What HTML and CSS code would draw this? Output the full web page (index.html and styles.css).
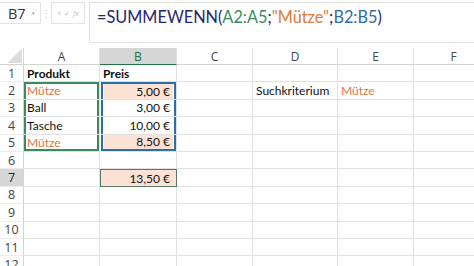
FILE: index.html
```html
<!DOCTYPE html>
<html lang="de">
<head>
    <meta charset="UTF-8">
    <meta name="viewport" content="width=device-width, initial-scale=1.0">
    <title>SUMMEWENN</title>
    <link rel="stylesheet" href="styles.css">
</head>
<body>
    <div class="formula-bar">
        <div class="name-box">B7<span class="drop">&#9662;</span></div>
        <div class="dots">&#8942;</div>
        <div class="fx-box"><span>&#215;</span><span>&#10003;</span><span class="fx">fx</span></div>
        <div class="formula">=SUMMEWENN(<span class="f-green">A2:A5</span>;<span class="f-orange">"Mütze"</span>;<span class="f-blue">B2:B5</span>)</div>
    </div>

    <div class="sheet">
        <div class="corner"></div>
        <div class="col-head">A</div>
        <div class="col-head active">B</div>
        <div class="col-head">C</div>
        <div class="col-head">D</div>
        <div class="col-head">E</div>
        <div class="col-head">F</div>

        <div class="row-head">1</div>
        <div class="cell bold">Produkt</div>
        <div class="cell bold">Preis</div>
        <div class="cell"></div>
        <div class="cell"></div>
        <div class="cell"></div>
        <div class="cell"></div>

        <div class="row-head">2</div>
        <div class="cell orange green-top">Mütze</div>
        <div class="cell num blue-top"><span class="fill">5,00 €</span></div>
        <div class="cell"></div>
        <div class="cell">Suchkriterium</div>
        <div class="cell orange">Mütze</div>
        <div class="cell"></div>

        <div class="row-head">3</div>
        <div class="cell green-mid">Ball</div>
        <div class="cell num blue-mid"><span class="plain">3,00 €</span></div>
        <div class="cell"></div>
        <div class="cell"></div>
        <div class="cell"></div>
        <div class="cell"></div>

        <div class="row-head">4</div>
        <div class="cell green-mid">Tasche</div>
        <div class="cell num blue-mid"><span class="plain">10,00 €</span></div>
        <div class="cell"></div>
        <div class="cell"></div>
        <div class="cell"></div>
        <div class="cell"></div>

        <div class="row-head">5</div>
        <div class="cell orange green-bot">Mütze</div>
        <div class="cell num blue-bot"><span class="fill">8,50 €</span></div>
        <div class="cell"></div>
        <div class="cell"></div>
        <div class="cell"></div>
        <div class="cell"></div>

        <div class="row-head">6</div>
        <div class="cell"></div>
        <div class="cell"></div>
        <div class="cell"></div>
        <div class="cell"></div>
        <div class="cell"></div>
        <div class="cell"></div>

        <div class="row-head active">7</div>
        <div class="cell"></div>
        <div class="cell num result">13,50 €</div>
        <div class="cell"></div>
        <div class="cell"></div>
        <div class="cell"></div>
        <div class="cell"></div>

        <div class="row-head">8</div>
        <div class="cell"></div>
        <div class="cell"></div>
        <div class="cell"></div>
        <div class="cell"></div>
        <div class="cell"></div>
        <div class="cell"></div>

        <div class="row-head">9</div>
        <div class="cell"></div>
        <div class="cell"></div>
        <div class="cell"></div>
        <div class="cell"></div>
        <div class="cell"></div>
        <div class="cell"></div>

        <div class="row-head">10</div>
        <div class="cell"></div>
        <div class="cell"></div>
        <div class="cell"></div>
        <div class="cell"></div>
        <div class="cell"></div>
        <div class="cell"></div>

        <div class="row-head">11</div>
        <div class="cell"></div>
        <div class="cell"></div>
        <div class="cell"></div>
        <div class="cell"></div>
        <div class="cell"></div>
        <div class="cell"></div>

        <div class="row-head">12</div>
        <div class="cell"></div>
        <div class="cell"></div>
        <div class="cell"></div>
        <div class="cell"></div>
        <div class="cell"></div>
        <div class="cell"></div>
    </div>
</body>
</html>
```

FILE: styles.css
```css
body {
    margin: 0;
    background-color: #fff;
    font-family: "Open Sans", sans-serif;
    overflow: hidden;
}

/* top bar with name box and formula */
.formula-bar {
    display: flex;
    align-items: flex-start;
    height: 48px;
    padding-top: 2px;
    box-sizing: border-box;
}
.name-box {
    width: 41px;
    height: 22px;
    box-sizing: border-box;
    border: 1px solid #e3e3e3;
    border-left: none;
    display: flex;
    align-items: center;
    padding-left: 8px;
    font-size: 14.5px;
    color: #333;
}
.name-box .drop {
    font-size: 5px;
    color: #999;
    margin-left: 6px;
}
.dots {
    width: 10px;
    text-align: center;
    font-size: 10px;
    line-height: 22px;
    color: #ccc;
}
.fx-box {
    width: 34px;
    height: 22px;
    box-sizing: border-box;
    border: 1px solid #e3e3e3;
    display: flex;
    align-items: center;
    justify-content: space-around;
    padding: 0 4px;
    font-size: 7px;
    color: #bbb;
}
.fx-box .fx {
    font-style: italic;
}
.formula {
    flex: 1;
    height: 41px;
    margin-left: 4px;
    box-sizing: border-box;
    border: 1px solid #e3e3e3;
    border-right: none;
    padding: 4px 0 0 7px;
    font-family: "Lato", sans-serif;
    font-size: 16.3px;
    line-height: 20px;
    color: #27266e;
    white-space: nowrap;
}
.f-green { color: #3b8a5b; }
.f-orange { color: #d97c3c; }
.f-blue { color: #2f6ea5; }

/* worksheet grid */
.sheet {
    display: grid;
    grid-template-columns: 24px 76px 77px 76px 85px 76px 80px;
    grid-template-rows: 17px;
    grid-auto-rows: 17.4px;
    font-family: "Lato", sans-serif;
    font-size: 12px;
    color: #111;
}
.corner {
    border-bottom: 1px solid #d4d4d4;
    border-right: 1px solid #d4d4d4;
    background: linear-gradient(135deg, transparent 52%, #dcdcdc 52%);
    background-size: 15px 15px;
    background-repeat: no-repeat;
    background-position: right 1px bottom 1px;
}
.col-head {
    display: flex;
    align-items: center;
    justify-content: center;
    border-right: 1px solid #e1e1e1;
    border-bottom: 1px solid #d4d4d4;
    font-family: "Open Sans", sans-serif;
    font-size: 12px;
    color: #444;
}
.col-head.active {
    background-color: #d6d6d6;
    color: #217346;
    border-bottom: 1px solid #217346;
}
.row-head {
    display: flex;
    align-items: center;
    justify-content: center;
    border-right: 1px solid #d4d4d4;
    border-bottom: 1px solid #ececec;
    font-family: "Open Sans", sans-serif;
    font-size: 12.5px;
    color: #444;
}
.row-head.active {
    background-color: #d6d6d6;
    color: #222;
}
.cell {
    display: flex;
    align-items: center;
    padding: 0 3px;
    border-right: 1px solid #e1e1e1;
    border-bottom: 1px solid #e1e1e1;
    white-space: nowrap;
    min-width: 0;
}
.bold { font-weight: bold; }
.orange { color: #d9783a; }
.num { justify-content: flex-end; }

/* range highlights from the formula */
.green-top { box-shadow: inset 2px 0 #3b8a5b, inset -2px 0 #3b8a5b, inset 0 2px #3b8a5b; }
.green-mid { box-shadow: inset 2px 0 #3b8a5b, inset -2px 0 #3b8a5b; }
.green-bot { box-shadow: inset 2px 0 #3b8a5b, inset -2px 0 #3b8a5b, inset 0 -2px #3b8a5b; }
.blue-top, .blue-mid, .blue-bot {
    margin-left: 1px;
    padding: 0 3px;
}
.blue-top { box-shadow: inset 2px 0 #2f6ea5, inset -2px 0 #2f6ea5, inset 0 2px #2f6ea5; padding-top: 2px; }
.blue-mid { box-shadow: inset 2px 0 #2f6ea5, inset -2px 0 #2f6ea5; }
.blue-bot { box-shadow: inset 2px 0 #2f6ea5, inset -2px 0 #2f6ea5, inset 0 -2px #2f6ea5; padding-bottom: 2px; }
.fill, .plain {
    flex: 1;
    align-self: stretch;
    display: flex;
    align-items: center;
    justify-content: flex-end;
    padding-right: 3px;
}
.fill { background-color: #fbe2d4; }

.result {
    background-color: #fbe2d4;
    border: 1px solid #5c7a63;
    padding-right: 6px;
}
```
